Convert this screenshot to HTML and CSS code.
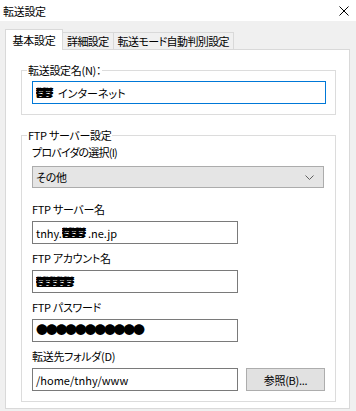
FILE: index.html
```html
<!DOCTYPE html>
<html lang="ja">
<head>
<meta charset="utf-8">
<link rel="stylesheet" href="styles.css">
</head>
<body>
<div class="window">
  <div class="titlebar">
    <span class="title">転送設定</span>
    <svg class="close" width="10" height="10" viewBox="0 0 10 10"><path d="M0.5 0.5 L9.5 9.5 M9.5 0.5 L0.5 9.5" stroke="#000" stroke-width="1" fill="none"/></svg>
  </div>
  <div class="tabs">
    <div class="tab active">基本設定</div>
    <div class="tab">詳細設定</div>
    <div class="tab">転送モード自動判別設定</div>
  </div>
  <div class="panel">
    <fieldset class="group g1">
      <legend>転送設定名(N)：</legend>
      <div class="input focus wide"><span class="blur b1">鬱鬱</span>インターネット</div>
    </fieldset>
    <fieldset class="group g2">
      <legend>FTP サーバー設定</legend>
      <div class="label first">プロバイダの選択(I)</div>
      <div class="select">
        <span>その他</span>
        <svg class="chev" width="9" height="5" viewBox="0 0 9 5"><path d="M0.5 0.5 L4.5 4.5 L8.5 0.5" stroke="#606060" stroke-width="1" fill="none"/></svg>
      </div>
      <div class="label">FTP サーバー名</div>
      <div class="input">tnhy.<span class="blur b2">鬱鬱鬱</span>.ne.jp</div>
      <div class="label">FTP アカウント名</div>
      <div class="input"><span class="blur b3">鬱鬱鬱鬱鬱</span></div>
      <div class="label">FTP パスワード</div>
      <div class="input"><span class="dots">●●●●●●●●●●●</span></div>
      <div class="label">転送先フォルダ(D)</div>
      <div class="row">
        <div class="input">/home/tnhy/www</div>
        <div class="button">参照(B)...</div>
      </div>
    </fieldset>
  </div>
</div>
</body>
</html>
```

FILE: styles.css
```css
* { box-sizing: border-box; }
html, body { margin: 0; padding: 0; }
body {
  width: 356px;
  height: 411px;
  overflow: hidden;
  background: #f0f0f0;
  font-family: "Noto Sans CJK JP", "Noto Sans", sans-serif;
  font-size: 11px;
  font-feature-settings: "palt";
  letter-spacing: -0.3px;
  color: #000;
}
.window {
  display: flex;
  flex-direction: column;
  height: 411px;
}
.titlebar {
  height: 21px;
  background: #fff;
  display: flex;
  align-items: center;
  justify-content: space-between;
  padding: 0 7px 0 3px;
  flex: none;
}
.title { line-height: 16px; }
.tabs {
  display: flex;
  align-items: flex-end;
  padding-left: 5px;
  margin-top: 8px;
  height: 20px;
  flex: none;
}
.tab {
  height: 17px;
  line-height: 16px;
  padding: 0 4px;
  border: 1px solid #d9d9d9;
  border-bottom: none;
  border-left: none;
  background: #f0f0f0;
  white-space: nowrap;
  letter-spacing: -0.6px;
}
.tab.active {
  position: relative;
  height: 21px;
  margin-bottom: -1px;
  padding: 2px 0 0 0;
  border-left: 1px solid #d9d9d9;
  background: #fff;
  width: 58px;
  text-align: center;
  letter-spacing: -0.3px;
}
.panel {
  flex: 1;
  margin: 0 6px 2px 5px;
  background: #fff;
  border: 1px solid #d9d9d9;
  padding: 12px 13px 0 15px;
}
.group {
  margin: 0;
  border: 1px solid #dcdcdc;
  padding: 0 10px 10px 10px;
  min-width: 0;
}
.group legend {
  padding: 0 1px;
  margin-left: -5px;
  line-height: 16px;
}
.g1 .input { margin-top: 3px; }
.g2 { margin-top: 12px; padding-bottom: 10px; }
.label {
  line-height: 16px;
  margin-top: 6px;
  margin-bottom: 4px;
}
.label.first { margin-top: 1px; margin-bottom: 6px; letter-spacing: -0.8px; }
.select + .label { margin-top: 13px; }
.input {
  width: 206px;
  height: 23px;
  border: 1px solid #7a7a7a;
  padding: 0 3px;
  display: flex;
  align-items: center;
  white-space: nowrap;
  line-height: 16px;
  letter-spacing: 0;
}
.input.wide { width: 294px; }
.input.focus { border-color: #0078d7; }
.select {
  width: 292px;
  height: 22px;
  background: #e5e5e5;
  border: 1px solid #acacac;
  display: flex;
  align-items: center;
  justify-content: space-between;
  padding: 0 9px 0 3px;
}
.row {
  display: flex;
  gap: 8px;
}
.button {
  width: 79px;
  height: 23px;
  background: #e1e1e1;
  border: 1px solid #adadad;
  display: flex;
  align-items: center;
  justify-content: center;
}
.blur {
  display: inline-block;
  font-weight: 900;
  font-size: 10px;
  letter-spacing: -3px;
  overflow: hidden;
  color: #000;
  text-shadow: 0.4px 0 #000, -0.4px 0 #000;
}
.b1 { width: 22px; }
.b2 { width: 26px; }
.b3 { width: 48px; }
.dots {
  font-size: 12px;
  letter-spacing: -2.3px;
  line-height: 16px;
  margin-top: -2px;
}
```
